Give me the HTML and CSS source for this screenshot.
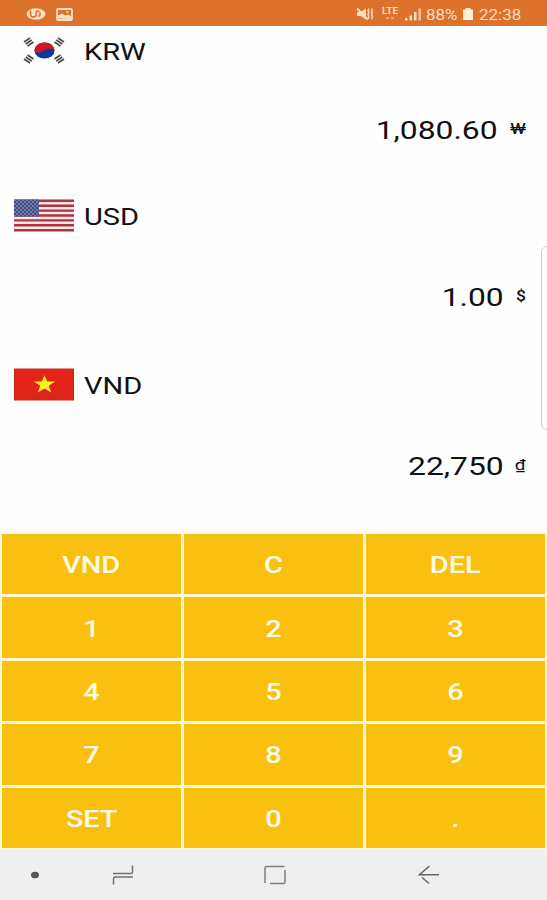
FILE: index.html
```
<!DOCTYPE html>
<html lang="en">
<head>
    <meta charset="UTF-8">
    <meta name="viewport" content="width=device-width, initial-scale=1.0">
    <title>Currency Calculator</title>
    <link rel="stylesheet" href="styles.css">
</head>
<body>

    <div class="phone">
        <!-- Status bar -->
        <div class="status-bar">
            <div class="status-left">
                <svg width="20" height="14" viewBox="0 0 20 14">
                    <ellipse cx="10" cy="7" rx="9.5" ry="5.8" fill="#fbe0c4"/>
                    <path d="M4.500 3.500v3.500q0 3 3 3 2.800 0 2.800-3V4M10 4.200h3.500M13.500 5.500q2 2.500-1.500 4" fill="none" stroke="#dc722c" stroke-width="1.5"/>
                </svg>
                <svg width="17" height="13" viewBox="0 0 17 13">
                    <rect x="1" y="1" width="15" height="11" rx="1" fill="none" stroke="#fbe0c4" stroke-width="1.8"/>
                    <path d="M2 10.500v-3L6 5.500l3 2 3-1 3 1.500v3z" fill="#fbe0c4"/>
                    <circle cx="11.500" cy="4" r="1" fill="#fbe0c4"/>
                </svg>
            </div>
            <div class="status-right">
                <svg width="19" height="14" viewBox="0 0 19 14">
                    <path d="M1 5h3.500L10 1.500v11L4.500 9H1z" fill="#f9dcc0"/>
                    <path d="M1 1.500L12 12.500" stroke="#f9dcc0" stroke-width="1.8"/>
                    <path d="M13 1.500l-1 2 1 2-1 2 1 2-1 2.500M16.500 1.500l-1 2 1 2-1 2 1 2-1 2.500" fill="none" stroke="#f9dcc0" stroke-width="1.500"/>
                </svg>
                <span class="lte"><b>LTE</b><i></i></span>
                <svg width="17" height="13" viewBox="0 0 17 13" fill="#f9dcc0">
                    <rect x="0" y="10" width="2.500" height="2.500"/>
                    <rect x="4.500" y="7.500" width="2.500" height="5"/>
                    <rect x="9" y="4" width="2.500" height="8.500"/>
                    <rect x="13.500" y="0.500" width="2.500" height="12" opacity="0.75"/>
                </svg>
                <span class="percent"><b>88%</b></span>
                <svg width="12" height="14" viewBox="0 0 12 14">
                    <path d="M3.500 1h5v1.500H11V13H1V2.500h2.500z" fill="#fdeeda"/>
                </svg>
                <span class="clock"><b>22:38</b></span>
            </div>
        </div>

        <!-- Currency list -->
        <div class="currencies">
            <div class="currency currency-krw">
                <div class="currency-head">
                    <svg class="flag" width="60" height="34" viewBox="0 0 60 34">
                        <rect width="60" height="34" fill="#fdfdfd"/>
                        <ellipse cx="30.500" cy="16.500" rx="10" ry="8" fill="#0d3a92"/>
                        <path d="M20.500 17C20.500 12 25 8.500 30.500 8.500s10 3.500 10 8c-3-2.500-7-2-10 0s-7 3-10 .5z" fill="#d3142c"/>
                        <g stroke="#4a4a4a" stroke-width="1.6">
                            <path d="M10 8l6-4M11.700 10l6-4M13.500 12l6-4"/>
                            <path d="M50 8l-6-4M48.300 10l-6-4M46.500 12l-6-4"/>
                            <path d="M10 25l6 4M11.700 23l6 4M13.500 21l6 4"/>
                            <path d="M50 25l-6 4M48.300 23l-6 4M46.500 21l-6 4"/>
                        </g>
                    </svg>
                    <span class="code">KRW</span>
                </div>
                <div class="amount"><span class="value">1,080.60</span><span class="symbol symbol-won">₩</span></div>
            </div>

            <div class="currency">
                <div class="currency-head">
                    <svg class="flag" width="60" height="34" viewBox="0 0 60 34">
                        <defs>
                            <pattern id="stars" width="4" height="4" patternUnits="userSpaceOnUse">
                                <circle cx="1" cy="1" r="0.750" fill="#b9bfdc"/>
                                <circle cx="3" cy="3" r="0.750" fill="#b9bfdc"/>
                            </pattern>
                        </defs>
                        <rect y="0.500" width="60" height="32" fill="#f6e9ea"/>
                        <path d="M0 1.700h60M0 6.700h60M0 11.600h60M0 16.500h60M0 21.400h60M0 26.300h60M0 31.300h60" stroke="#ae3440" stroke-width="2.400"/>
                        <rect y="0.500" width="25" height="17" fill="#414b86"/>
                        <rect y="0.500" width="25" height="17" fill="url(#stars)"/>
                    </svg>
                    <span class="code">USD</span>
                </div>
                <div class="amount"><span class="value">1.00</span><span class="symbol symbol-dollar">$</span></div>
            </div>

            <div class="currency">
                <div class="currency-head">
                    <svg class="flag" width="60" height="34" viewBox="0 0 60 34">
                        <rect x="0.500" y="1" width="59" height="31" fill="#e2231a" stroke="#c92a20"/>
                        <path d="M30.500 7l2.700 6.500h8L34.700 17.700l2.500 6.800-6.700-4.100-6.700 4.100 2.500-6.800-6.500-4.200h8z" fill="#fff01f"/>
                    </svg>
                    <span class="code">VND</span>
                </div>
                <div class="amount"><span class="value">22,750</span><span class="symbol">₫</span></div>
            </div>

            <!-- Edge panel handle -->
            <div class="edge-handle"></div>
        </div>

        <!-- Keypad -->
        <div class="keypad">
            <button class="key"><span>VND</span></button>
            <button class="key"><span>C</span></button>
            <button class="key"><span>DEL</span></button>
            <button class="key"><span>1</span></button>
            <button class="key"><span>2</span></button>
            <button class="key"><span>3</span></button>
            <button class="key"><span>4</span></button>
            <button class="key"><span>5</span></button>
            <button class="key"><span>6</span></button>
            <button class="key"><span>7</span></button>
            <button class="key"><span>8</span></button>
            <button class="key"><span>9</span></button>
            <button class="key"><span>SET</span></button>
            <button class="key"><span>0</span></button>
            <button class="key"><span>.</span></button>
        </div>

        <!-- Navigation bar -->
        <div class="nav-bar">
            <svg width="10" height="8" viewBox="0 0 10 8"><ellipse cx="5" cy="4" rx="4" ry="3.300" fill="#555"/></svg>
            <svg class="recents" width="22" height="20" viewBox="0 0 22 20">
                <path d="M1 8.500h18q1.500 0 1.500-1.500V0.500M21 12H3q-1.500 0-1.500 1.500v6" fill="none" stroke="#707070" stroke-width="1.500"/>
            </svg>
            <svg class="home" width="24" height="20" viewBox="0 0 24 20">
                <path d="M2 18V3.500q0-2 2-2H21.500M22 5v11.500q0 2-2 2H7" fill="none" stroke="#808080" stroke-width="1.500"/>
            </svg>
            <svg class="back" width="22" height="20" viewBox="0 0 22 20">
                <path d="M11.500 1L1.500 9.800H21M4 12.500l7 6" fill="none" stroke="#666" stroke-width="1.500"/>
            </svg>
        </div>
    </div>

</body>
</html>
```
FILE: styles.css
```
body, html {
    margin: 0;
    padding: 0;
    height: 100%;
    overflow: hidden;
}

body {
    font-family: Roboto, "Noto Sans", sans-serif;
    background-color: #fefefe;
    color: #111;
}

.phone {
    display: flex;
    flex-direction: column;
    width: 547px;
    height: 900px;
}

/* Status bar */
.status-bar {
    display: flex;
    justify-content: space-between;
    align-items: center;
    height: 26px;
    padding: 2px 25px 0 26px;
    box-sizing: border-box;
    background-color: #dc722c;
    color: #f9dcc0;
}

.status-left, .status-right {
    display: flex;
    align-items: center;
}

.status-left {
    gap: 10px;
}

.lte {
    width: 18px;
    margin: -5px 5px 0 7px;
    font-size: 9px;
    line-height: 9px;
}

.lte b {
    display: inline-block;
    transform: scaleX(1.12);
    transform-origin: left;
}

/* Data arrows under LTE */
.lte i {
    display: block;
    width: 3px;
    height: 2px;
    margin: 1px 0 -3px 4px;
    background-color: #eda267;
    box-shadow: 5px 0 #eda267;
}

.percent {
    width: 32px;
    margin: 0 4px 0 4px;
}

.clock {
    width: 43px;
    margin-left: 5px;
}

.percent b, .clock b {
    display: inline-block;
    font-size: 15px;
    font-weight: normal;
    transform: scaleX(1.13);
    transform-origin: left;
}

/* Currency list */
.currencies {
    position: relative;
    height: 507px;
}

.currency {
    height: 169px;
}

.currency-krw {
    height: 165px;
}

.currency-head {
    display: flex;
    align-items: center;
    height: 50px;
    padding-left: 14px;
}

.code {
    margin-left: 10px;
    padding-top: 2px;
    font-size: 24px;
    transform: scaleX(1.21); /* wide lettering */
    transform-origin: left;
}

.amount {
    display: flex;
    justify-content: flex-end;
    align-items: center;
    height: 110px;
    padding-right: 21px;
}

.currency-krw .amount {
    height: 106px;
}

.value {
    font-size: 26.5px;
    transform: scaleX(1.2);
    transform-origin: right;
}

.symbol {
    margin-left: 14px;
    font-size: 15px;
    transform: scaleX(1.25);
    transform-origin: right;
}

.symbol-won {
    margin-left: 17px;
    transform: scaleX(1.45);
}

.symbol-dollar {
    font-size: 14px;
    font-weight: 500;
}

.edge-handle {
    position: absolute;
    top: 220px;
    right: -6px;
    width: 10px;
    height: 182px;
    border: 1px solid #cfcfcf;
    border-radius: 6px;
}

/* Keypad */
.keypad {
    display: grid;
    grid-template-columns: repeat(3, 1fr);
    grid-template-rows: repeat(5, 1fr);
    gap: 3px;
    height: 316px;
    padding: 1px 2px;
    box-sizing: border-box;
    background-color: #fff8d2;
}

.key {
    padding: 3px 0 0;
    border: none;
    background-color: #f9c012;
    color: #fffbe2;
    font-family: inherit;
    font-size: 23px;
    font-weight: 500;
}

.key span {
    display: inline-block;
    transform: scaleX(1.26);
}

/* Navigation bar */
.nav-bar {
    display: flex;
    align-items: center;
    flex: 1;
    padding-left: 30px;
    background-color: #efefef;
}

.recents {
    margin-left: 72px;
}

.home {
    margin-left: 129px;
}

.back {
    margin-left: 131px;
}
```
